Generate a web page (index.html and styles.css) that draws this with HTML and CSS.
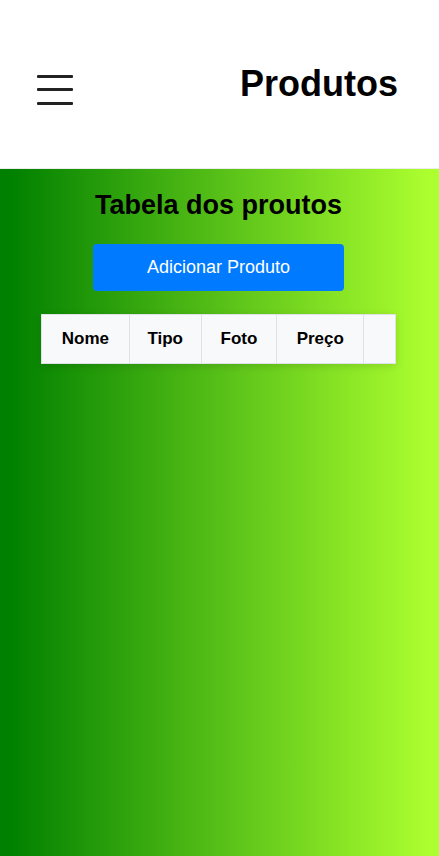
FILE: index.html
```html
<!DOCTYPE html>
<html lang="pt">
<head>
  <meta charset="UTF-8">
  <title>Produtos</title>
  <link rel="stylesheet" href="styles.css">
</head>
<body>

<header class="topbar">
  <div class="menu-icon">
    <span></span>
    <span></span>
    <span></span>
  </div>
  <h1>Produtos</h1>
</header>

<main class="content">
  <h2>Tabela dos proutos</h2>
  <button class="btn-add">Adicionar Produto</button>

  <table class="product-table">
    <thead>
      <tr>
        <th class="col-nome">Nome</th>
        <th class="col-tipo">Tipo</th>
        <th class="col-foto">Foto</th>
        <th class="col-preco">Preço</th>
        <th class="col-acao"></th>
      </tr>
    </thead>
    <tbody id="productList"></tbody>
  </table>
</main>

</body>
</html>
```

FILE: styles.css
```css
* {
  box-sizing: border-box;
}

html, body {
  height: 100%;
}

body {
  margin: 0;
  font-family: "Liberation Sans", Arial, sans-serif;
  display: flex;
  flex-direction: column;
}

.topbar {
  height: 169px;
  flex-shrink: 0;
  background: white;
  display: flex;
  align-items: center;
  justify-content: space-between;
  padding: 0 41px 0 37px;
  border-bottom: 1px solid #ececec;
}

.menu-icon {
  width: 36px;
  height: 30px;
  margin-top: 11px;
  display: flex;
  flex-direction: column;
  justify-content: space-between;
}

.menu-icon span {
  height: 3px;
  background: #222;
  border-radius: 1px;
}

.topbar h1 {
  margin: 0;
  font-size: 36px;
  font-weight: bold;
  color: #000;
}

.content {
  flex: 1;
  background: linear-gradient(to right, green 2%, greenyellow 98%);
  display: flex;
  flex-direction: column;
  align-items: center;
  padding: 21px 2px 0 0;
}

.content h2 {
  margin: 0 0 23px;
  font-size: 27px;
  color: #000;
}

.btn-add {
  width: 251px;
  height: 47px;
  border: none;
  border-radius: 4px;
  background-color: #007bff;
  color: white;
  font-family: inherit;
  font-size: 18px;
  cursor: pointer;
  margin-bottom: 23px;
}

.product-table {
  width: 355px;
  border-collapse: collapse;
  background: #f8f9fa;
  box-shadow: 0 2px 8px rgba(0,0,0,0.12);
}

.product-table th {
  padding: 15px 0;
  line-height: 18px;
  font-size: 17px;
  font-weight: bold;
  color: #000;
  border: 1px solid #dee2e6;
  text-align: center;
}

.col-nome { width: 88px; }
.col-tipo { width: 72px; }
.col-foto { width: 76px; }
.col-preco { width: 87px; }
.col-acao { width: 32px; }
```
